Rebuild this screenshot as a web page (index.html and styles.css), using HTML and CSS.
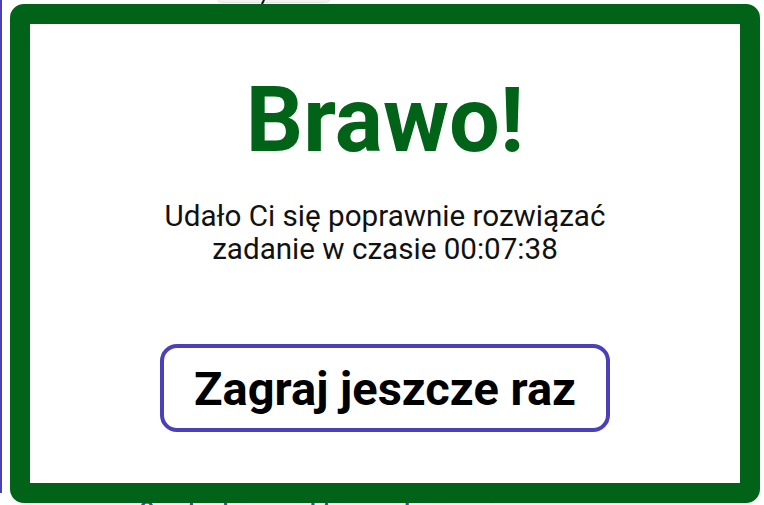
FILE: index.html
```html
<!DOCTYPE html>
<html lang="pl">
<head>
<meta charset="utf-8">
<title>Brawo!</title>
<link rel="stylesheet" href="styles.css">
</head>
<body>
<div class="page">
  <div class="bg-line"></div>
  <div class="bg-top"><span class="bg-stroke"></span></div>
  <div class="bg-bottom">Sudoku &nbsp; dla &nbsp; dzieci</div>
</div>
<div class="modal">
  <div class="modal-inner">
    <h1 class="title">Brawo!</h1>
    <p class="message">Udało Ci się poprawnie rozwiązać<br>zadanie w czasie 00:07:38</p>
    <button class="again">Zagraj jeszcze raz</button>
  </div>
</div>
</body>
</html>
```

FILE: styles.css
```css
html, body {
  margin: 0;
  padding: 0;
  background: #ffffff;
  font-family: Roboto, "Liberation Sans", sans-serif;
  width: 764px;
  height: 505px;
  overflow: hidden;
}

.page {
  position: relative;
  width: 764px;
  height: 505px;
}

.bg-line {
  position: absolute;
  left: 0;
  top: 0;
  width: 2px;
  height: 493px;
  background: #4a40b8;
}

.bg-top {
  position: absolute;
  left: 217px;
  top: -8px;
  width: 113px;
  height: 10px;
  border-radius: 6px;
  background: #f2f2f2;
  box-shadow: 0 1px 2px rgba(0,0,0,0.15);
}

.bg-stroke {
  position: absolute;
  left: 45px;
  top: 6px;
  width: 2px;
  height: 8px;
  background: #111;
  transform: rotate(25deg);
}

.bg-bottom {
  position: absolute;
  left: 140px;
  top: 497px;
  color: #4a40b8;
  font-size: 22px;
  font-weight: 700;
  letter-spacing: 8px;
}

.modal {
  position: absolute;
  left: 10px;
  top: 4px;
  width: 750px;
  height: 499px;
  box-sizing: border-box;
  border: 20px solid #016317;
  border-radius: 14px;
  background: #ffffff;
}

.modal-inner {
  display: flex;
  flex-direction: column;
  align-items: center;
  text-align: center;
  padding-top: 47px;
}

.title {
  margin: 0;
  font-size: 90px;
  font-weight: 700;
  line-height: 100px;
  color: #016317;
}

.message {
  margin: 29px 0 0;
  font-size: 29.6px;
  line-height: 33px;
  color: #111111;
}

.again {
  margin-top: 78px;
  width: 450px;
  height: 88px;
  box-sizing: border-box;
  border: 4px solid #4a40b8;
  border-radius: 17px;
  background: #ffffff;
  font-family: Roboto, "Liberation Sans", sans-serif;
  font-size: 47px;
  font-weight: 700;
  color: #000000;
  padding: 0;
  cursor: pointer;
}
```
